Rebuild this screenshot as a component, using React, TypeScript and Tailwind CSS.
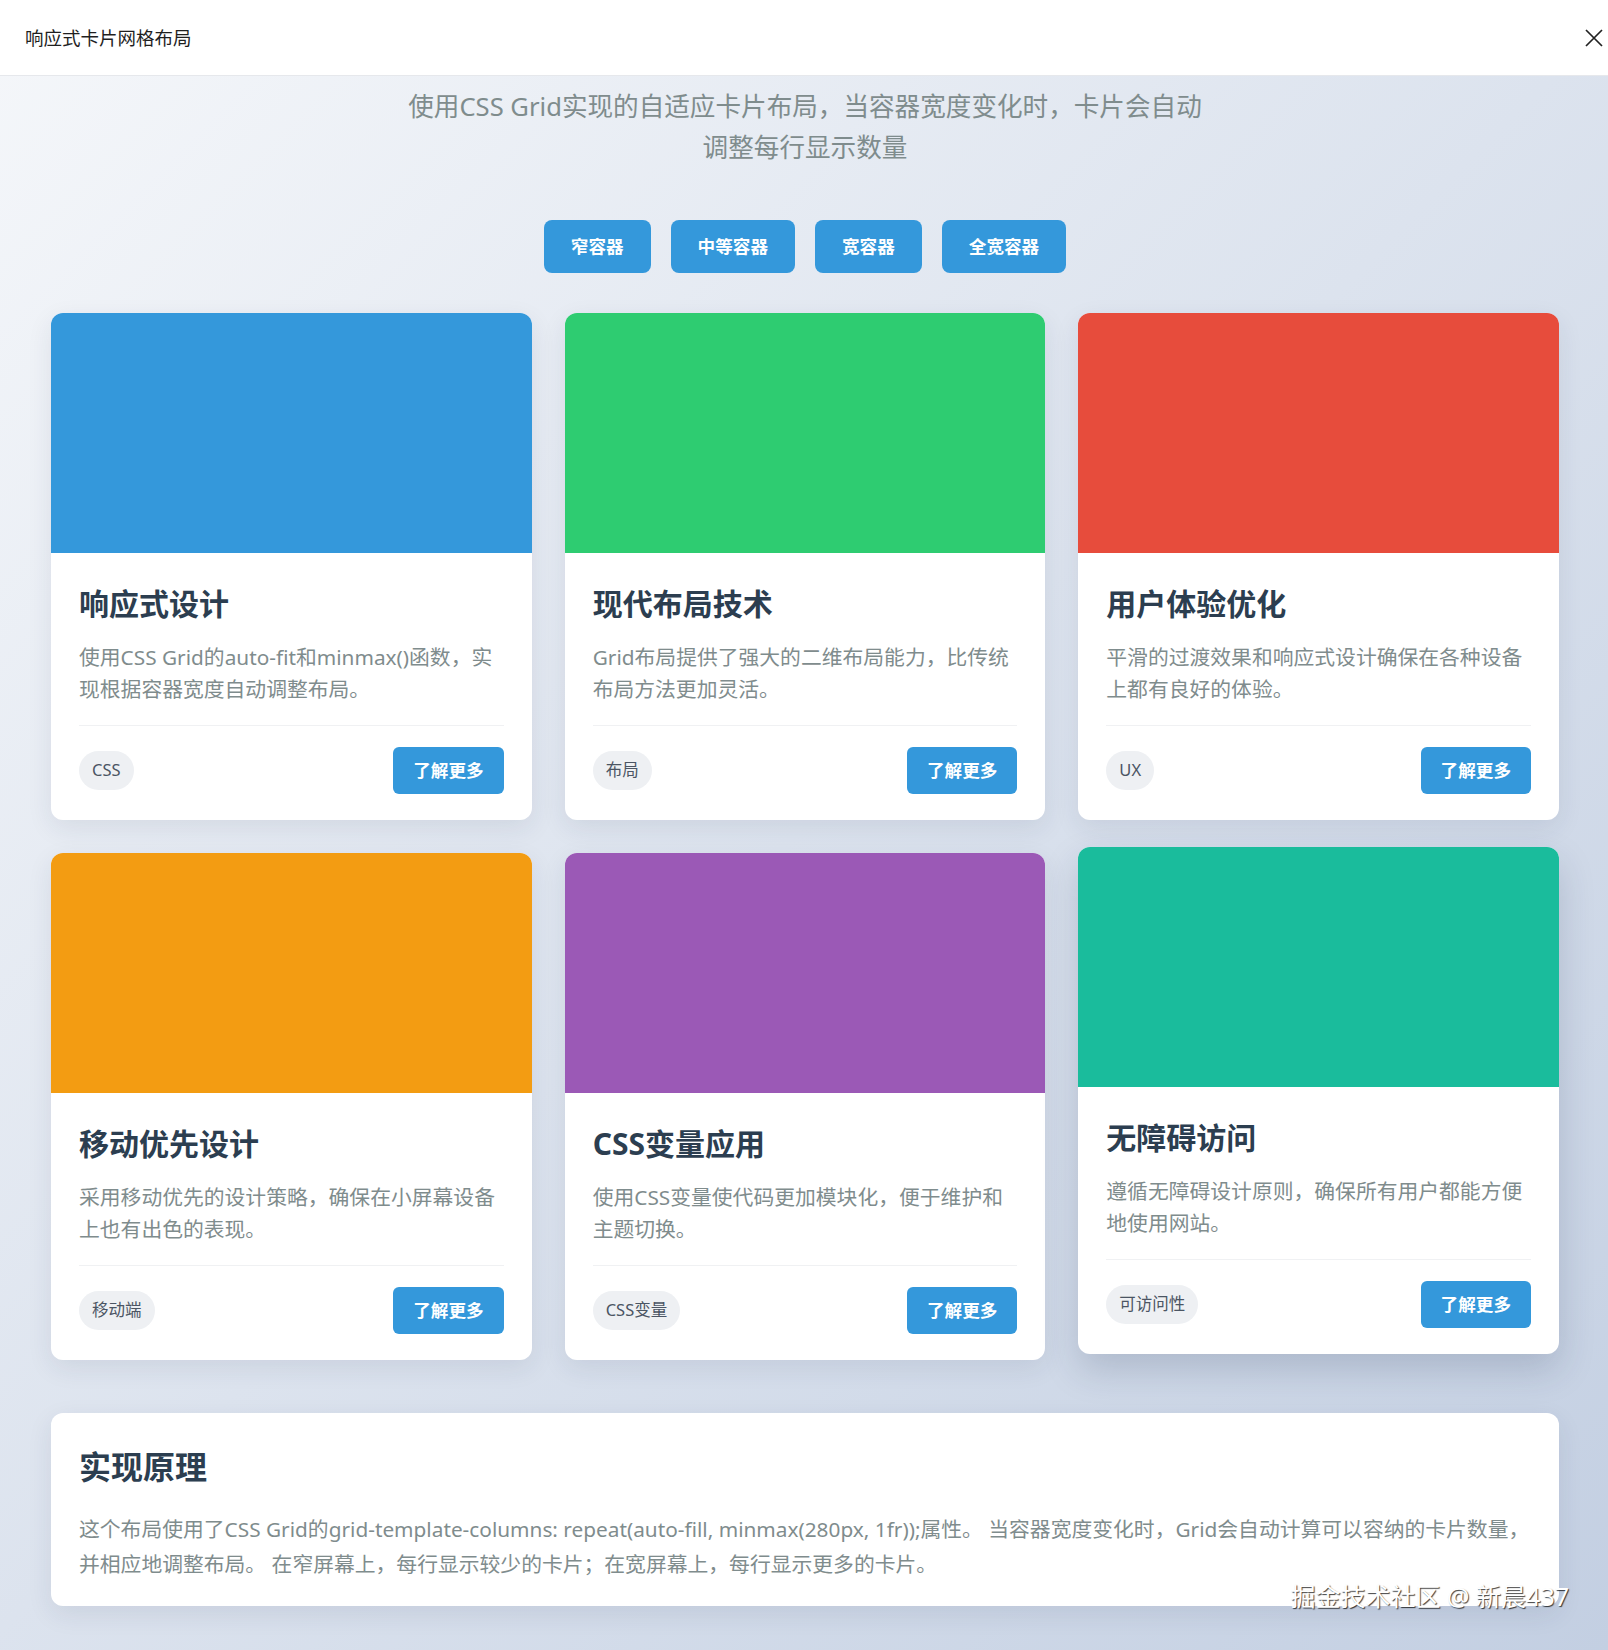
import React from "react";

type Card = {
  title: string;
  desc: string;
  tag: string;
  color: string;
  hovered?: boolean;
};

const cards: Card[] = [
  {
    title: "响应式设计",
    desc: "使用CSS Grid的auto-fit和minmax()函数，实现根据容器宽度自动调整布局。",
    tag: "CSS",
    color: "bg-[#3498db]",
  },
  {
    title: "现代布局技术",
    desc: "Grid布局提供了强大的二维布局能力，比传统布局方法更加灵活。",
    tag: "布局",
    color: "bg-[#2ecc71]",
  },
  {
    title: "用户体验优化",
    desc: "平滑的过渡效果和响应式设计确保在各种设备上都有良好的体验。",
    tag: "UX",
    color: "bg-[#e74c3c]",
  },
  {
    title: "移动优先设计",
    desc: "采用移动优先的设计策略，确保在小屏幕设备上也有出色的表现。",
    tag: "移动端",
    color: "bg-[#f39c12]",
  },
  {
    title: "CSS变量应用",
    desc: "使用CSS变量使代码更加模块化，便于维护和主题切换。",
    tag: "CSS变量",
    color: "bg-[#9b59b6]",
  },
  {
    title: "无障碍访问",
    desc: "遵循无障碍设计原则，确保所有用户都能方便地使用网站。",
    tag: "可访问性",
    color: "bg-[#1abc9c]",
    hovered: true,
  },
];

const sizes = ["窄容器", "中等容器", "宽容器", "全宽容器"];

function GridCard({ card }: { card: Card }) {
  return (
    <div
      className={
        "overflow-hidden rounded-xl bg-white " +
        (card.hovered
          ? "-translate-y-[6px] shadow-[0_16px_36px_rgba(30,45,80,0.18)]"
          : "shadow-[0_8px_26px_rgba(30,45,80,0.09)]")
      }
    >
      <div className={"h-[240px] " + card.color} />
      <div className="px-7 pt-7 pb-[26px]">
        <h3 className="text-[30px] font-bold leading-[45px] text-[#2c3e50]">{card.title}</h3>
        <p className="mt-[15px] text-[20.8px] leading-[32px] text-[#7f8c8d]">{card.desc}</p>
        <div className="mt-5 flex items-center justify-between border-t border-[#f0f1f3] pt-[21px]">
          <span className="flex h-[39px] items-center rounded-full bg-[#eef0f3] px-[13px] text-[16.5px] text-[#4b5563]">
            {card.tag}
          </span>
          <button className="flex h-[47px] items-center rounded-md bg-[#3498db] px-5 text-[17.6px] font-bold text-white">
            了解更多
          </button>
        </div>
      </div>
    </div>
  );
}

export default function App() {
  return (
    <div className="relative min-h-screen bg-[linear-gradient(135deg,#f5f7fa_0%,#c3cfe2_100%)] font-['Noto_Sans','Noto_Sans_CJK_SC',sans-serif]">
      <header className="flex h-[76px] items-center justify-between border-b border-[#e6e8ec] bg-white pl-[25px] pr-[4px]">
        <span className="text-[18.5px] text-[#1f1f1f]">响应式卡片网格布局</span>
        <svg width="20" height="20" viewBox="0 0 20 20" className="text-[#222]">
          <path d="M2 2 L18 18 M18 2 L2 18" stroke="currentColor" strokeWidth="1.7" fill="none" />
        </svg>
      </header>

      <main className="pl-[51px] pr-[49px] pt-[10px] pb-[44px]">
        <p className="mx-auto max-w-[800px] text-center text-[25.6px] leading-[41px] text-[#7f8c8d]">
          使用CSS Grid实现的自适应卡片布局，当容器宽度变化时，卡片会自动调整每行显示数量
        </p>

        <div className="mt-[52px] flex justify-center gap-5">
          {sizes.map((s) => (
            <button
              key={s}
              className="flex h-[53px] items-center rounded-lg bg-[#3498db] px-[27px] text-[17.6px] font-bold text-white"
            >
              {s}
            </button>
          ))}
        </div>

        <div className="mt-10 grid grid-cols-3 gap-[33px]">
          {cards.map((c) => (
            <GridCard key={c.title} card={c} />
          ))}
        </div>

        <section className="mt-[53px] rounded-xl bg-white px-7 pt-[30px] pb-[24px] shadow-[0_8px_26px_rgba(30,45,80,0.09)]">
          <h2 className="text-[32px] font-bold leading-[48px] text-[#2c3e50]">实现原理</h2>
          <p className="mt-[21px] text-[20.8px] leading-[35px] text-[#7f8c8d]">
            这个布局使用了CSS Grid的grid-template-columns: repeat(auto-fill, minmax(280px, 1fr));属性。
            当容器宽度变化时，Grid会自动计算可以容纳的卡片数量，并相应地调整布局。
            在窄屏幕上，每行显示较少的卡片；在宽屏幕上，每行显示更多的卡片。
          </p>
        </section>
      </main>

      <div className="pointer-events-none absolute right-[39px] bottom-[41px] text-[25px] leading-none text-white [text-shadow:1px_1px_1px_rgba(0,0,0,0.75)]">
        掘金技术社区 @ 新晨437
      </div>
    </div>
  );
}
